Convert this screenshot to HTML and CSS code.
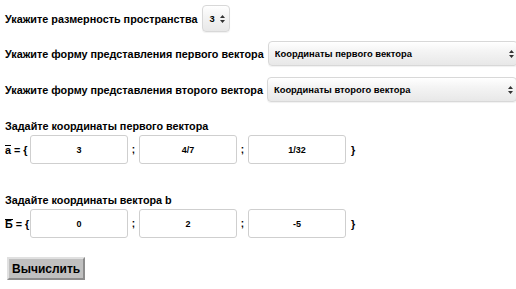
FILE: index.html
```html
<!DOCTYPE html>
<html lang="ru">
<head>
    <meta charset="UTF-8">
    <title>Векторы</title>
    <link rel="stylesheet" href="styles.css">
</head>
<body>
    <div class="row row-dim">
        <span class="label">Укажите размерность пространства</span>
        <div class="sel sel-dim">
            <select><option>3</option><option>2</option></select>
            <svg class="arr" width="5" height="8" viewBox="0 0 5 8"><path d="M2.5 0 L5 3 H0 Z M2.5 8 L5 5 H0 Z" fill="#333"/></svg>
        </div>
    </div>

    <div class="row row-form">
        <span class="label">Укажите форму представления первого вектора</span>
        <div class="sel sel-wide">
            <select><option>Координаты первого вектора</option></select>
            <svg class="arr" width="5" height="8" viewBox="0 0 5 8"><path d="M2.5 0 L5 3 H0 Z M2.5 8 L5 5 H0 Z" fill="#333"/></svg>
        </div>
    </div>

    <div class="row row-form second">
        <span class="label">Укажите форму представления второго вектора</span>
        <div class="sel sel-wide">
            <select><option>Координаты второго вектора</option></select>
            <svg class="arr" width="5" height="8" viewBox="0 0 5 8"><path d="M2.5 0 L5 3 H0 Z M2.5 8 L5 5 H0 Z" fill="#333"/></svg>
        </div>
    </div>

    <h3 class="title first">Задайте координаты первого вектора</h3>
    <div class="coords">
        <span class="vec"><span class="bar">a</span> = {</span>
        <input type="text" value="3">
        <span class="sep">;</span>
        <input type="text" value="4/7">
        <span class="sep">;</span>
        <input type="text" value="1/32">
        <span class="close">}</span>
    </div>

    <h3 class="title">Задайте координаты вектора b</h3>
    <div class="coords">
        <span class="vec"><span class="bar">Б</span> = {</span>
        <input type="text" value="0">
        <span class="sep">;</span>
        <input type="text" value="2">
        <span class="sep">;</span>
        <input type="text" value="-5">
        <span class="close">}</span>
    </div>

    <button class="calc">Вычислить</button>
</body>
</html>
```

FILE: styles.css
```css
body { margin: 0; padding: 5px 0 0 5px; font-family: "Liberation Sans", Arial, sans-serif; font-weight: bold; color: #000; background: #fff; }
.row { display: flex; align-items: center; }
.label { font-size: 10.8px; margin-right: 5px; white-space: nowrap; flex-shrink: 0; }
.row-form { margin-top: 9px; }
.row-form .label { margin-right: 4px; }
.row-form.second { margin-top: 11px; }

.sel { position: relative; flex-shrink: 0; }
.sel select { display: block; appearance: none; -webkit-appearance: none; font-family: inherit; font-weight: bold; font-size: 9.4px; color: #000; border: 1px solid #d8d8d8; border-radius: 4px; background: linear-gradient(#ffffff, #f4f4f4 40%, #e8e8e8); box-shadow: 0 1px 1px rgba(0,0,0,0.06); padding: 0 0 0 6px; margin: 0; outline: none; }
.sel-dim select { width: 28px; height: 27px; }
.sel-wide select { width: 250px; height: 25px; }
.sel .arr { position: absolute; right: 5px; top: 50%; margin-top: -4px; pointer-events: none; }
.sel-wide .arr { right: 4px; }

.title { font-size: 10.8px; margin: 30px 0 0 0; line-height: 13px; }
.title.first { margin-top: 18px; }
.coords { display: flex; align-items: center; margin-top: 2px; font-size: 10.8px; }
.vec { width: 25px; white-space: nowrap; }
.bar { display: inline-block; line-height: 8px; border-top: 1px solid #000; }
.coords input { width: 98px; height: 29px; box-sizing: border-box; border: 1px solid #cfcfcf; border-radius: 3px; text-align: center; font-family: inherit; font-weight: bold; font-size: 9px; padding: 0; margin: 0; color: #000; }
.sep { width: 11px; text-align: center; font-size: 10px; }
.close { margin-left: 5px; }

.calc { display: block; margin: 19px 0 0 2px; font-family: inherit; font-weight: bold; font-size: 12px; background: #c0c0c0; border: 2px outset #e0e0e0; padding: 0 3px; height: 23px; color: #000; }
```
